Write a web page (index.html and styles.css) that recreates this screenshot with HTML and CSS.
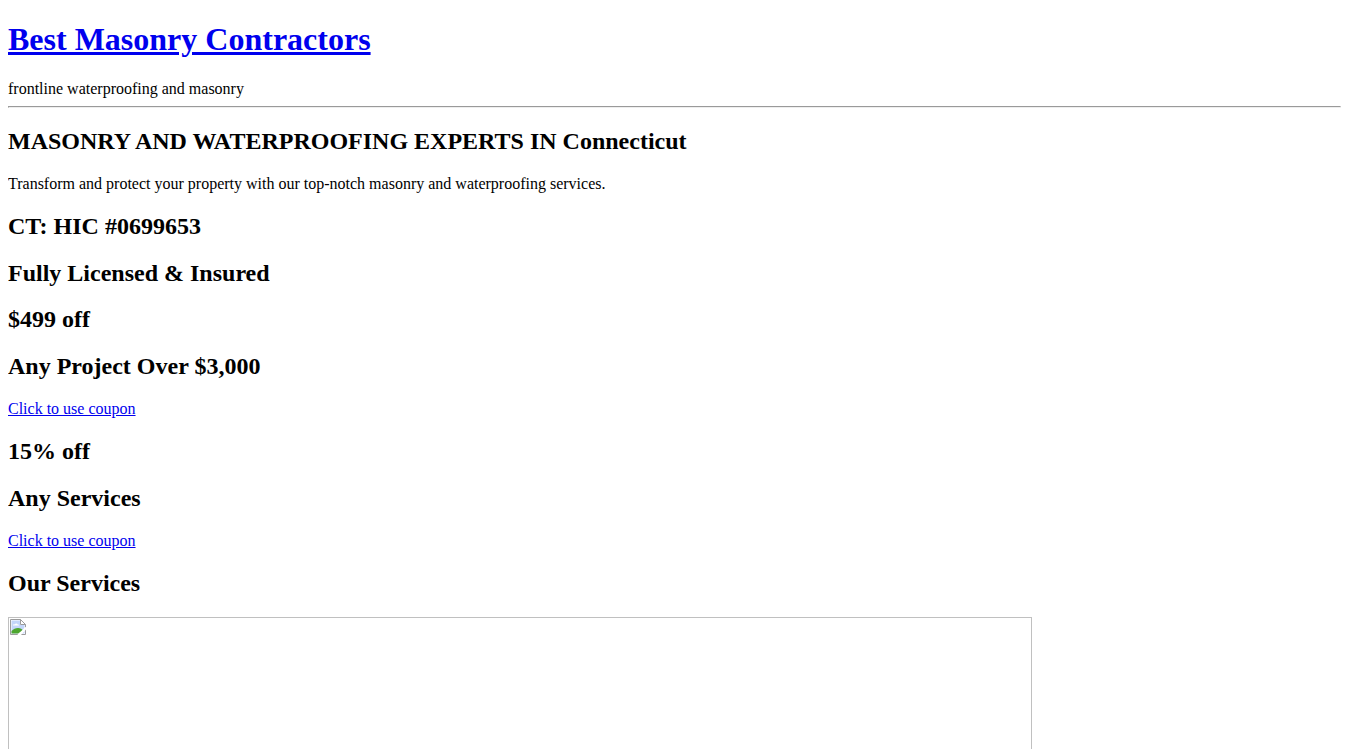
FILE: index.html
```html
<!DOCTYPE html>
<html lang="en">
<head>
    <meta charset="UTF-8">
    <meta name="viewport" content="width=device-width, initial-scale=1.0">
    <title>Best Masonry Contractors</title>
    <link rel="stylesheet" href="styles.css">
</head>
<body>
    <header>
        <h1><a href="#">Best Masonry Contractors</a></h1>
        <div class="description">frontline waterproofing and masonry</div>
    </header>
    <hr>
    <main>
        <h2>MASONRY AND WATERPROOFING EXPERTS IN Connecticut</h2>
        <div class="intro">Transform and protect your property with our top-notch masonry and waterproofing services.</div>
        <h2>CT: HIC #0699653</h2>
        <h2>Fully Licensed &amp; Insured</h2>
        <h2>$499 off</h2>
        <h2>Any Project Over $3,000</h2>
        <a class="coupon" href="#coupon">Click to use coupon</a>
        <h2>15% off</h2>
        <h2>Any Services</h2>
        <a class="coupon" href="#coupon">Click to use coupon</a>
        <h2>Our Services</h2>
        <div class="service-image">
            <svg width="16" height="16" viewBox="0 0 16 16">
                <path d="M.5.5h10l5 5v10H.5z" fill="#fff" stroke="#9c9c9c"/>
                <path d="M1.500 1.500H10V6h4.500v8.500h-13z" fill="#c3d6fb"/>
                <path d="M3 6.500c0-1 1-1.500 1.700-1C5.200 4 7.200 4 7.700 5.500c1 0 1.300.5 1.300 1z" fill="#fff"/>
                <path d="M1.500 14.500V12c2-2 4-3 6.500-3s4 1 5 2.500l-3 3z" fill="#4ea62f"/>
                <path d="M10.500.5v5h5z" fill="#fff" stroke="#9c9c9c"/>
                <path d="M16 8v2.500L11 16H7.500c1-2.500 5.500-4.500 7-7.500z" fill="#fff"/>
            </svg>
        </div>
    </main>
</body>
</html>
```
FILE: styles.css
```css
html {
    overflow: hidden;
}
body {
    margin: 0 8px;
    font-family: "Liberation Serif", "Times New Roman", serif;
    font-size: 16px;
}
h1 {
    font-size: 2em;
    margin: 0.67em 0;
}
h2 {
    font-size: 1.5em;
    margin: 0.83em 0;
}
hr {
    margin: 8px 0;
}
.service-image {
    box-sizing: border-box;
    width: 1024px;
    height: 683px;
    padding: 1px;
    border: 1px solid #c0c0c0;
}
.service-image svg {
    display: block;
}
```
